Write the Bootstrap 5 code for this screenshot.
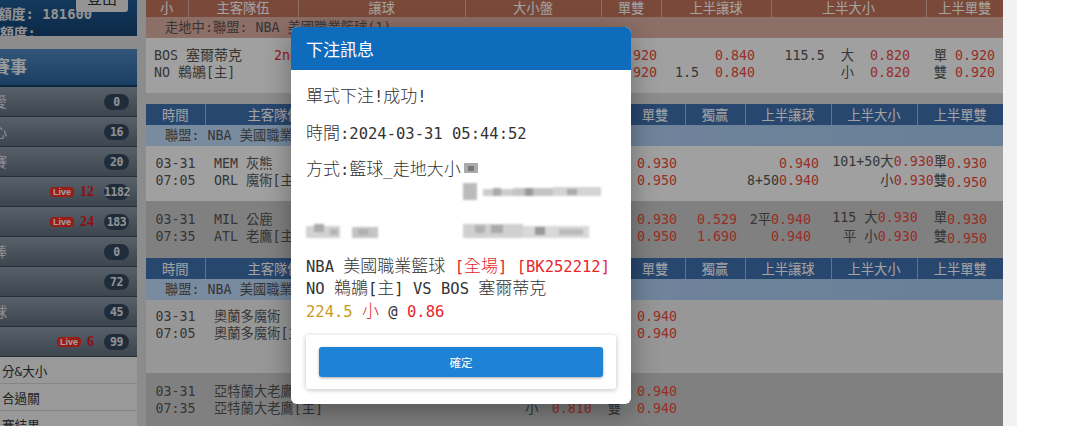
<!DOCTYPE html>
<html lang="zh-Hant">
<head>
<meta charset="utf-8">
<title>下注訊息</title>
<link href="https://cdn.jsdelivr.net/npm/bootstrap@5.3.0/dist/css/bootstrap.min.css" rel="stylesheet">
<style>
html,body{height:426px;overflow:hidden;background:#fff}
body{font-family:"DejaVu Sans Mono","Noto Sans CJK TC",monospace;font-size:13.3px;line-height:17px;color:#555}
.stage{width:1080px;height:426px;overflow:hidden;position:relative}
.pagebg{width:1003px;height:426px;background:#dcdcdc;overflow:hidden}
.strip{width:14px;background:#f2f2f2}
.veil{position:absolute;left:0;top:0;width:1003px;height:426px;background:rgba(0,0,0,.36)}
.side{width:137px;flex:none}
.acct{height:36px;background:linear-gradient(#1f5b94,#14406e);color:#e6e6e6;font-weight:700;padding:5px 0 0 0;margin-bottom:13px;overflow:hidden;position:relative;white-space:nowrap;text-indent:-2px;line-height:19px;font-size:13.8px}
.logout{position:absolute;left:76px;top:-14px;width:52px;height:26px;border-radius:3px;background:#e8e8e8;color:#333;font-weight:400;text-align:center;text-indent:0;font-size:15px;line-height:26px}
.evt{height:38px;background:linear-gradient(#4f86bd,#2a6399);border-bottom:2px solid #173f66;color:#f1f1f1;font-size:17px;font-weight:700;line-height:36px;text-indent:-7px;overflow:hidden}
.srow{height:30px;background:linear-gradient(#8a98a6,#5f6d7b);border-bottom:1px solid #3c4855;color:#dde;font-size:14px;line-height:28px;padding-right:8px;overflow:hidden}
.slabel{margin-left:-7px;margin-right:auto}
.pill{width:25px;flex:none;height:16px;border-radius:8px;background:#34465b;color:#e2e6ea;font-size:11.5px;font-weight:700;line-height:16px;text-align:center;margin-left:10px;white-space:nowrap;letter-spacing:-.4px}
.livep{height:10px;border-radius:4px;background:#ef2d24;color:#fff;font-family:"Liberation Sans",sans-serif;font-size:9px;font-weight:700;line-height:10px;padding:0 3px;margin-right:6px}
.livec{font-family:"Liberation Serif",serif;font-weight:700;font-size:14px;color:#e3141b}
.lrow{height:27px;background:#f0f0f0;border-bottom:1px solid #d0d0d0;font-size:12.6px;line-height:30px;padding-left:2px;color:#333}
.maincol{width:857px;margin-left:9px;margin-top:-4px;flex:none}
.tb{table-layout:fixed;width:857px;border-collapse:collapse;margin-bottom:11px}
.tb td,.tb th{padding:0;white-space:nowrap;overflow:visible}
.hd th{height:21px;font-weight:400;text-align:center;color:#fff;border-right:1px solid #9fb5d2;line-height:18px;padding-top:3px}
.hd th:last-child{border-right:0}
.brown .hd th{background:#c0735a;border-right-color:#d9b0a0;padding-top:4px;line-height:17px}
.blue .hd th{background:#3f6fae}
.lg td{height:21px;padding-left:19px;line-height:20px;padding-top:1px}
.brown .lg td{background:#dcaea0}
.blue .lg td{background:linear-gradient(90deg,#bedaf8,#a3c7ee)}
.dr td{vertical-align:middle;background:#fbfbfb;padding-bottom:4px}
.dr.dim td{background:#ececec}
.dr.shade td{background:#c8c8c8}
.dr.h55 td{height:55px}.dr.h57 td{height:57px}.dr.h73 td{height:73px}
.dr td.tp{vertical-align:top;padding-top:8px;padding-bottom:0}
.dr td.tp2{vertical-align:top;padding-top:10px;padding-bottom:0}
.tb td.tm{padding-left:9px}
.nm{font-size:14px;line-height:1}
.odd{color:#ec4a3e}
.rt{text-align:right}
.lift{vertical-align:-2px}
.rd{color:#ec2a2a}
.gapa{margin-left:5px}
.dlg{position:absolute;left:291px;top:27px;width:340px;height:377px;background:#fff;border-radius:6px;overflow:hidden;box-shadow:0 8px 28px rgba(0,0,0,.35);font-size:15.5px;line-height:22.5px;color:#333}
.dlg .rd{color:#e8262a}
.dlghd{height:43px;background:#0f6cbd;color:#fff;font-family:"Noto Sans CJK TC",sans-serif;font-size:17px;line-height:43px;padding-left:15px}
.dlgbd{padding:16px 15px 0}
.dlgbd p{margin:0 0 14px}
.cj{font-size:17px;font-weight:300;line-height:1}
.mos{display:block;filter:blur(1.2px)}
.tail{margin-left:2px;vertical-align:-2px}
.blurs{height:17px;margin:-13px 0 23px 157px}
.blurs2{height:18px;margin-bottom:15px;justify-content:space-between;padding-right:25px}
.gold{color:#c99a1f}
.foot{margin-top:12px;height:54px;padding:12px 13px;border-radius:3px;box-shadow:0 1px 5px rgba(0,0,0,.25)}
.okb{display:block;width:100%;height:30px;background:#1e82d6;color:#fff;border:0;border-radius:3px;font-family:"Noto Sans CJK TC",sans-serif;font-size:11.5px;line-height:30px;padding:0;box-shadow:0 1px 3px rgba(0,0,0,.35)}
</style>
</head>
<body>
<div class="stage d-flex">
  <div class="pagebg d-flex">
    <div class="side">
      <div class="acct">額度: 181600<br>額度:<div class="logout">登出</div></div>
      <div class="evt">賽事</div>
      <div class="srow d-flex align-items-center"><span class="slabel">愛</span><span class="pill">0</span></div>
      <div class="srow d-flex align-items-center"><span class="slabel">心</span><span class="pill">16</span></div>
      <div class="srow d-flex align-items-center"><span class="slabel">賽</span><span class="pill">20</span></div>
      <div class="srow d-flex align-items-center"><span class="slabel"></span><span class="livep">Live</span><span class="livec">12</span><span class="pill">1182</span></div>
      <div class="srow d-flex align-items-center"><span class="slabel"></span><span class="livep">Live</span><span class="livec">24</span><span class="pill">183</span></div>
      <div class="srow d-flex align-items-center"><span class="slabel">棒</span><span class="pill">0</span></div>
      <div class="srow d-flex align-items-center"><span class="slabel"></span><span class="pill">72</span></div>
      <div class="srow d-flex align-items-center"><span class="slabel">球</span><span class="pill">45</span></div>
      <div class="srow d-flex align-items-center"><span class="slabel"></span><span class="livep">Live</span><span class="livec">6</span><span class="pill">99</span></div>
      <div class="lrow">分&amp;大小</div>
      <div class="lrow">合過關</div>
      <div class="lrow">賽結果</div>
    </div>
    <div class="maincol">
      <table class="tb brown">
        <colgroup><col style="width:42px"><col style="width:110px"><col style="width:167px"><col style="width:136px"><col style="width:60px"><col style="width:110px"><col style="width:155px"><col style="width:77px"></colgroup>
        <tr class="hd"><th>小</th><th>主客隊伍</th><th>讓球</th><th>大小盤</th><th>單雙</th><th>上半讓球</th><th>上半大小</th><th>上半單雙</th></tr>
        <tr class="lg"><td colspan="8">走地中:聯盟: NBA 美國職業籃球(1)</td></tr>
        <tr class="dr h55">
          <td colspan="2"><div class="ps-2">BOS <span class="nm">塞爾蒂克</span> <span class="rd ms-4">2nd</span></div><div class="ps-2">NO <span class="nm">鵜鶘</span>[主]</div></td>
          <td></td><td></td>
          <td class="rt pe-1"><div class="odd">0.920</div><div class="odd">0.920</div></td>
          <td><div class="rt odd me-3">0.840</div><div class="rt me-3">1.5&nbsp;&nbsp;<span class="odd">0.840</span></div></td>
          <td class="rt pe-3"><div>115.5&nbsp;&nbsp;大&nbsp;&nbsp;<span class="odd">0.820</span></div><div>小&nbsp;&nbsp;<span class="odd">0.820</span></div></td>
          <td class="rt pe-2"><div>單 <span class="odd">0.920</span></div><div>雙 <span class="odd">0.920</span></div></td>
        </tr>
      </table>
      <table class="tb blue mb-0">
        <colgroup><col style="width:59px"><col style="width:138px"><col style="width:162px"><col style="width:120px"><col style="width:60px"><col style="width:60px"><col style="width:86px"><col style="width:86px"><col style="width:86px"></colgroup>
        <tr class="hd"><th>時間</th><th>主客隊伍</th><th>讓球</th><th>大小盤</th><th>單雙</th><th>獨贏</th><th>上半讓球</th><th>上半大小</th><th>上半單雙</th></tr>
        <tr class="lg"><td colspan="9">聯盟: NBA 美國職業籃球(2)</td></tr>
        <tr class="dr h55">
          <td class="text-center"><div>03-31</div><div>07:05</div></td>
          <td class="tm"><div>MEM 灰熊</div><div>ORL 魔術[主]</div></td>
          <td></td><td></td>
          <td class="rt pe-2"><div class="odd">0.930</div><div class="odd">0.950</div></td>
          <td></td>
          <td class="rt pe-2 ps-0"><div class="odd pe-1">0.940</div><div class="pe-1">8+50<span class="odd">0.940</span></div></td>
          <td colspan="2" class="rt pe-3"><div>101+50大<span class="odd">0.930</span>單<span class="odd lift">0.930</span></div><div>小<span class="odd">0.930</span>雙<span class="odd lift">0.950</span></div></td>
        </tr>
        <tr class="dr h57 shade">
          <td class="text-center"><div>03-31</div><div>07:35</div></td>
          <td class="tm"><div>MIL 公鹿</div><div>ATL 老鷹[主]</div></td>
          <td></td><td></td>
          <td class="rt pe-2"><div class="odd">0.930</div><div class="odd">0.950</div></td>
          <td class="rt pe-2"><div class="odd">0.529</div><div class="odd">1.690</div></td>
          <td class="rt pe-3 ps-0"><div class="pe-1">2平<span class="odd">0.940</span></div><div class="odd pe-1">0.940</div></td>
          <td colspan="2" class="rt pe-3"><div>115 大<span class="odd">0.930</span>&nbsp;&nbsp;單<span class="odd lift">0.930</span></div><div>平 小<span class="odd">0.930</span>&nbsp;&nbsp;雙<span class="odd lift">0.950</span></div></td>
        </tr>
        <tr class="hd"><th>時間</th><th>主客隊伍</th><th>讓球</th><th>大小盤</th><th>單雙</th><th>獨贏</th><th>上半讓球</th><th>上半大小</th><th>上半單雙</th></tr>
        <tr class="lg"><td colspan="9">聯盟: NBA 美國職業籃球(2)</td></tr>
        <tr class="dr h73 dim">
          <td class="text-center tp"><div>03-31</div><div>07:05</div></td>
          <td class="tm tp"><div>奧蘭多魔術</div><div>奧蘭多魔術[主]</div></td>
          <td></td><td></td>
          <td class="rt pe-2 tp"><div class="odd">0.940</div><div class="odd">0.940</div></td>
          <td colspan="4"></td>
        </tr>
        <tr class="dr h73 shade">
          <td class="text-center tp2"><div>03-31</div><div>07:35</div></td>
          <td class="tm tp2"><div>亞特蘭大老鷹</div><div>亞特蘭大老鷹[主]</div></td>
          <td></td>
          <td class="rt pe-1 tp2"><div>&nbsp;</div><div>小<span class="odd gapa">&nbsp;0.810</span>&nbsp;&nbsp;雙</div></td>
          <td class="rt pe-2 tp2"><div class="odd">0.940</div><div class="odd">0.940</div></td>
          <td colspan="4"></td>
        </tr>
      </table>
    </div>
  </div>
  <div class="strip"></div>
  <div class="veil"></div>
  <div class="dlg">
    <div class="dlghd">下注訊息</div>
    <div class="dlgbd">
      <p><span class="cj">單式下注</span>!<span class="cj">成功</span>!</p>
      <p><span class="cj">時間</span>:2024-03-31 05:44:52</p>
      <p><span class="cj">方式</span>:<span class="cj">籃球</span>_<span class="cj">走地大小</span><svg class="tail" width="16" height="15" viewBox="0 0 16 15" aria-hidden="true"><rect width="16" height="15" fill="#fff"/><rect x="1" y="1" width="14" height="10" fill="#aaa"/><rect x="5" y="4" width="6" height="5" fill="#777"/></svg></p>
      <div class="blurs"><svg class="mos" width="140" height="17" viewBox="0 0 140 17" aria-hidden="true"><rect x="0" y="0" width="14" height="17" fill="#bbb"/><rect x="20" y="6" width="30" height="7" fill="#ccc"/><rect x="30" y="5" width="8" height="8" fill="#aaa"/><rect x="50" y="5" width="40" height="8" fill="#c4c4c4"/><rect x="62" y="5" width="8" height="8" fill="#999"/><rect x="90" y="4" width="48" height="9" fill="#d4d4d4"/><rect x="104" y="6" width="10" height="6" fill="#aaa"/></svg></div>
      <div class="blurs2 d-flex"><svg class="mos" width="74" height="18" viewBox="0 0 74 18" aria-hidden="true"><rect x="0" y="3" width="34" height="12" fill="#d2d2d2"/><rect x="8" y="1" width="10" height="8" fill="#aaa"/><rect x="24" y="6" width="8" height="6" fill="#b4b4b4"/><rect x="46" y="4" width="26" height="11" fill="#c4c4c4"/><rect x="52" y="6" width="10" height="6" fill="#b0b0b0"/></svg><svg class="mos" width="128" height="18" viewBox="0 0 128 18" aria-hidden="true"><rect x="0" y="1" width="60" height="14" fill="#d0d0d0"/><rect x="12" y="2" width="10" height="8" fill="#b0b0b0"/><rect x="28" y="2" width="12" height="8" fill="#aaa"/><rect x="60" y="3" width="66" height="12" fill="#d8d8d8"/><rect x="72" y="4" width="10" height="8" fill="#999"/><rect x="96" y="6" width="24" height="6" fill="#bbb"/></svg></div>
      <div>NBA <span class="cj">美國職業籃球</span> <span class="rd">[<span class="cj">全場</span>] [BK252212]</span></div>
      <div>NO <span class="cj">鵜鶘</span>[<span class="cj">主</span>] VS BOS <span class="cj">塞爾蒂克</span></div>
      <div><span class="gold">224.5</span> <span class="rd cj">小</span> @ <span class="rd">0.86</span></div>
      <div class="foot"><button class="okb" type="button">確定</button></div>
    </div>
  </div>
</div>
<script src="https://cdn.jsdelivr.net/npm/bootstrap@5.3.0/dist/js/bootstrap.bundle.min.js"></script>
</body>
</html>
